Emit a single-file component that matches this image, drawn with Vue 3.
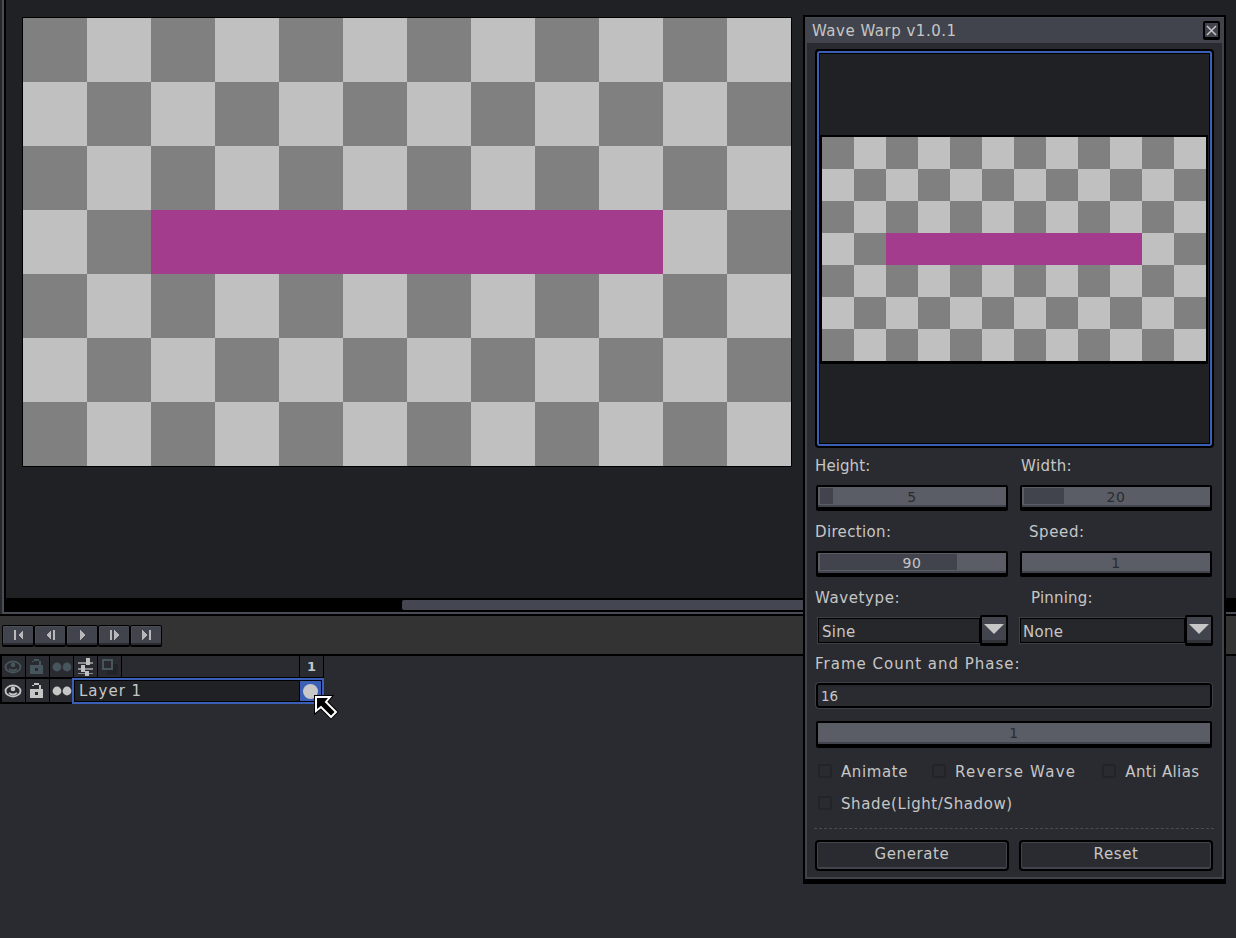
<script setup>
const navIcons = [
  { id: 'first', d: 'M0 0h2v10H0zM9 0v10L4 5z' },
  { id: 'prev', d: 'M5 0v10L0 5zM7 0h2v10H7z' },
  { id: 'play', d: 'M2 0l5 5-5 5z' },
  { id: 'next', d: 'M0 0h2v10H0zM4 0l5 5-5 5z' },
  { id: 'last', d: 'M0 0l5 5-5 5zM7 0h2v10H7z' }
]
const topSliders = [
  { label: 'Height:', value: '5', fill: '13px', shift: -1, ls: 0.1 },
  { label: 'Width:', value: '20', fill: '40px', shift: 1, ls: 0.4 },
  { label: 'Direction:', value: '90', fill: '137px', shift: -1, ls: 0.35, light: true },
  { label: 'Speed:', value: '1', fill: '0px', shift: 9, ls: 0.6 }
]
const combos = [
  { label: 'Wavetype:', value: 'Sine', shift: -1, ls: 0.6, cls: 'combo-l' },
  { label: 'Pinning:', value: 'None', shift: 11, ls: 0.2, cls: 'combo-r' }
]
</script>

<template>
  <div class="app">
    <section class="editor">
      <div class="ring">
        <div class="canvas">
          <div class="sprite">
            <div class="big checker">
              <div class="band"></div>
            </div>
          </div>
        </div>
        <div class="hscroll"><div class="thumb"></div></div>
      </div>
    </section>

    <div class="transport">
      <button v-for="n in navIcons" :key="n.id" class="nav">
        <svg width="9" height="10" viewBox="0 0 9 10" shape-rendering="crispEdges"><path :d="n.d" fill="#b8b8b8" /></svg>
      </button>
    </div>

    <section class="timeline">
      <div class="trow head">
        <div class="cell">
          <svg class="eye" width="18" height="14" viewBox="0 0 18 14"><ellipse cx="9" cy="7" rx="7.5" ry="5.5" fill="none" stroke="#47555c" stroke-width="1.8"/><circle cx="9" cy="5" r="2.3" fill="#47555c"/><path d="M5 9q4 3 8 0" fill="none" stroke="#47555c" stroke-width="1.8"/></svg>
        </div>
        <div class="cell">
          <svg class="lock" width="13" height="15" viewBox="0 0 13 15" shape-rendering="crispEdges"><path d="M0 6h13v9H0zM2 2h2V0h5v2h2v4H9V2H4v1H2z" fill="#47555c"/><path d="M5 9h3v3H5z" fill="#2a2b30"/></svg>
        </div>
        <div class="cell">
          <svg width="20" height="10" viewBox="0 0 20 10"><circle cx="5" cy="5" r="4.4" fill="#47555c"/><circle cx="15" cy="5" r="4.4" fill="#47555c"/></svg>
        </div>
        <div class="cell">
          <svg width="15" height="18" viewBox="0 0 15 18" shape-rendering="crispEdges"><path d="M0 4h15v2H0zM0 10h15v2H0zM0 15h15v1H0z" fill="#8a8c90"/><path d="M8 0h4v7H8zM3 7h4v7H3zM7 13h4v5H7z" fill="#c0c0c0"/></svg>
        </div>
        <div class="cell">
          <svg width="16" height="16" viewBox="0 0 16 16" shape-rendering="crispEdges"><path d="M5 5h11v11H5z" fill="#232428"/><path d="M0 0h11v11H0z" fill="#47555c"/><path d="M2 2h7v7H2z" fill="#2a2b30"/></svg>
        </div>
        <div class="cell wide"></div>
        <div class="cell frame-no">1</div>
      </div>
      <div class="trow layer">
        <div class="cell">
          <svg class="eye" width="18" height="14" viewBox="0 0 18 14"><ellipse cx="9" cy="7" rx="7.5" ry="5.5" fill="none" stroke="#c6c6c6" stroke-width="1.8"/><circle cx="9" cy="5" r="2.3" fill="#c6c6c6"/><path d="M5 9q4 3 8 0" fill="none" stroke="#c6c6c6" stroke-width="1.8"/></svg>
        </div>
        <div class="cell">
          <svg class="lock" width="13" height="15" viewBox="0 0 13 15" shape-rendering="crispEdges"><path d="M0 6h13v9H0zM2 2h2V0h5v2h2v4H9V2H4v1H2z" fill="#c6c6c6"/><path d="M5 9h3v3H5z" fill="#2a2b30"/></svg>
        </div>
        <div class="cell">
          <svg width="20" height="10" viewBox="0 0 20 10"><circle cx="5" cy="5" r="4.4" fill="#c6c6c6"/><circle cx="15" cy="5" r="4.4" fill="#c6c6c6"/></svg>
        </div>
        <div class="name">
          <span class="name-text">Layer 1</span>
          <span class="cel"><i class="dot"></i></span>
        </div>
      </div>
    </section>

    <svg class="cursor" width="26" height="26" viewBox="0 0 26 26">
      <polygon points="3,3 17,3 13,8 23,18 18,23 8,13 3,17" fill="#000" stroke="#000" stroke-width="4"/>
      <polygon points="3,3 17,3 13,8 23,18 18,23 8,13 3,17" fill="#000" stroke="#fff" stroke-width="2"/>
    </svg>

    <aside class="dialog">
      <header class="dlg-title">
        <span class="dlg-name">Wave Warp v1.0.1</span>
        <button class="close">
          <svg width="11" height="11" viewBox="0 0 11 11"><path d="M1 1l9 9M10 1l-9 9" stroke="#c6c6c6" stroke-width="1.5"/></svg>
        </button>
      </header>
      <div class="dlg-body">
        <div class="preview">
          <div class="small-frame">
            <div class="small checker"><div class="band small-band"></div></div>
          </div>
        </div>

        <div class="fields">
          <div v-for="s in topSliders" :key="s.label" class="field">
            <div class="lbl" :style="{ marginLeft: s.shift + 'px', letterSpacing: s.ls + 'px' }">{{ s.label }}</div>
            <div class="slider" :class="{ light: s.light }" :style="{ '--fill': s.fill }">{{ s.value }}</div>
          </div>
          <div v-for="c in combos" :key="c.label" class="field">
            <div class="lbl" :style="{ marginLeft: c.shift + 'px', letterSpacing: c.ls + 'px' }">{{ c.label }}</div>
            <div class="combo" :class="c.cls">
              <div class="combo-input">{{ c.value }}</div>
              <button class="combo-btn"><i class="tri"></i></button>
            </div>
          </div>
        </div>

        <div class="lbl frame-lbl">Frame Count and Phase:</div>
        <div class="entry">16</div>
        <div class="slider phase">1</div>

        <div class="checks first">
          <label class="chk c1"><i class="box"></i>Animate</label>
          <label class="chk c2"><i class="box"></i>Reverse Wave</label>
          <label class="chk c3"><i class="box"></i>Anti Alias</label>
        </div>
        <div class="checks second">
          <label class="chk"><i class="box"></i>Shade(Light/Shadow)</label>
        </div>

        <div class="sep"></div>
        <div class="actions">
          <button class="act">Generate</button>
          <button class="act">Reset</button>
        </div>
      </div>
    </aside>
  </div>
</template>

<style>
html, body { margin: 0; background: #2a2b30; }
</style>

<style scoped>
.app {
  position: relative;
  width: 1236px;
  height: 938px;
  overflow: hidden;
  display: flex;
  flex-direction: column;
  background: #2a2b30;
  font-family: "DejaVu Sans", sans-serif;
  font-size: 15px;
  letter-spacing: 0.6px;
  color: #c6c6c6;
}
button { font: inherit; letter-spacing: inherit; color: inherit; padding: 0; margin: 0; }
i { display: block; }

.checker {
  background-color: #808080;
  background-image: conic-gradient(#c0c0c0 25%, #808080 0 50%, #c0c0c0 0 75%, #808080 0);
}
.band { background: #a33c8c; }

.editor {
  height: 616px;
  flex: none;
  box-sizing: border-box;
  padding-left: 2px;
  border-bottom: 2px solid #000;
  background: #26272b;
}
.ring {
  height: 100%;
  box-sizing: border-box;
  border-left: 2px solid #484c55;
  border-bottom: 2px solid #484c55;
  display: flex;
  flex-direction: column;
}
.canvas {
  height: 598px;
  flex: none;
  box-sizing: border-box;
  border-left: 2px solid #000;
  background: #202125;
  padding: 17px 0 0 16px;
}
.sprite { width: 768px; height: 448px; outline: 1px solid #000; margin-left: 1px; margin-top: 1px; }
.big {
  width: 768px;
  height: 448px;
  box-sizing: border-box;
  background-size: 128px 128px;
  padding: 192px 128px 0;
}
.big .band { height: 64px; }
.hscroll {
  height: 14px;
  box-sizing: border-box;
  background: #000;
  padding: 2px 12px 2px 398px;
}
.thumb { height: 10px; background: #444751; border-radius: 2px 0 0 2px; }

.transport {
  height: 38px;
  flex: none;
  box-sizing: border-box;
  background: #333;
  padding: 9px 0 0 2px;
  display: flex;
  align-items: flex-start;
}
.nav {
  width: 32px;
  height: 22px;
  box-sizing: border-box;
  border: 1px solid #000;
  border-bottom-width: 2px;
  border-radius: 2px;
  background: #41444d;
  box-shadow: inset 0 -2px 0 #2a2b30, inset 1px 1px 0 #484c55;
  display: flex;
  align-items: center;
  justify-content: center;
  padding-bottom: 2px;
}

.timeline {
  flex: 1;
  border-top: 2px solid #000;
}
.trow {
  display: flex;
  width: 324px;
  background: #000;
  padding-left: 2px;
  box-sizing: border-box;
  gap: 1px;
}
.head { height: 23px; padding-bottom: 2px; }
.layer { height: 25px; padding-bottom: 2px; position: relative; }
.cell {
  width: 23px;
  flex: none;
  background: #2a2b30;
  display: flex;
  align-items: center;
  justify-content: center;
}
.eye { margin-right: 2px; }
.lock { margin-right: 2px; }
.wide { width: 177px; }
.frame-no { font-size: 13px; font-weight: 700; letter-spacing: 0; }
.name {
  width: 252px;
  height: 26px;
  margin: -1px 0 0 -2px;
  flex: none;
  box-sizing: border-box;
  border: 2px solid #3a5fb5;
  background: #000;
  padding: 1px;
  display: flex;
  position: relative;
  z-index: 1;
  gap: 1px;
}
.name-text {
  flex: 1;
  background: #202125;
  padding-left: 4px;
  line-height: 20px;
  font-size: 15px;
  letter-spacing: 1px;
}
.cel {
  width: 21px;
  flex: none;
  background: #3a5fb5;
  display: flex;
  align-items: center;
  justify-content: center;
}
.dot { width: 15px; height: 15px; border-radius: 50%; background: #c8c8c8; }
.cursor { position: absolute; left: 313px; top: 694px; z-index: 3; }

.dialog {
  position: absolute;
  left: 803px;
  top: 15px;
  width: 423px;
  height: 869px;
  box-sizing: border-box;
  border: 2px solid #000;
  border-bottom-width: 5px;
  background: #2a2b30;
  display: flex;
  flex-direction: column;
  box-shadow: inset 0 0 0 2px #41444d;
}
.dlg-title {
  height: 26px;
  flex: none;
  background: #41444d;
  border-top: 1px solid #484c55;
  box-sizing: border-box;
  display: flex;
  align-items: center;
  justify-content: space-between;
  padding: 0 4px 0 7px;
}
.dlg-name { font-size: 15px; letter-spacing: 0.5px; line-height: 22px; padding-top: 1px; }
.close {
  width: 17px;
  height: 19px;
  box-sizing: border-box;
  border: 2px solid #000;
  border-bottom-width: 3px;
  border-radius: 2px;
  background: #41444d;
  display: flex;
  align-items: center;
  justify-content: center;
}
.dlg-body { padding: 0 12px 0 11px; display: flex; flex-direction: column; flex: 1; }

.preview {
  width: 395px;
  height: 395px;
  margin: 8px 0 0 1px;
  box-sizing: border-box;
  border: 2px solid #3a5fb5;
  outline: 2px solid #000;
  box-shadow: inset 0 0 0 1px #000;
  border-radius: 2px;
  background: #202125;
  padding: 82px 0 0 1px;
  display: flex;
  align-items: flex-start;
  justify-content: flex-start;
}
.small-frame { border: 2px solid #000; border-bottom-width: 3px; }
.small {
  width: 384px;
  height: 224px;
  box-sizing: border-box;
  background-size: 64px 64px;
  padding: 96px 64px 0;
}
.small-band { height: 32px; }

.fields {
  display: grid;
  grid-template-columns: 192px 192px;
  column-gap: 12px;
  row-gap: 10px;
  margin-top: 9px;
}
.lbl { height: 20px; line-height: 22px; white-space: nowrap; }
.slider {
  height: 26px;
  box-sizing: border-box;
  margin-top: 10px;
  border: 2px solid #000;
  border-bottom-width: 4px;
  border-radius: 2px;
  background: linear-gradient(#41444d, #41444d) no-repeat 2px 1px / var(--fill, 0px) 16px, #5a5d66;
  box-shadow: inset 0 -2px 0 #41444d;
  text-align: center;
  line-height: 20px;
  font-size: 14px;
  color: #2a2b30;
}
.slider.light { color: #c6c6c6; }
.combo { margin-top: 8px; height: 31px; display: flex; align-items: flex-start; }
.combo-l { margin-left: 1px; }
.combo-l .combo-input { padding-left: 3px; }
.combo-r { margin-left: -1px; margin-right: -1px; }
.combo-input {
  flex: 1;
  height: 27px;
  margin-top: 2px;
  box-sizing: border-box;
  border: 2px solid #000;
  outline: 1px solid #3c3f46;
  outline-offset: -1px;
  background: #26272b;
  padding-left: 2px;
  line-height: 27px;
  font-size: 15px;
  letter-spacing: .3px;
}
.combo-btn {
  width: 28px;
  height: 31px;
  flex: none;
  margin-left: -1px;
  box-sizing: border-box;
  border: 2px solid #000;
  border-bottom-width: 3px;
  border-radius: 2px;
  background: #41444d;
  box-shadow: inset 0 -3px 0 #2f3137;
  display: flex;
  align-items: center;
  justify-content: center;
  padding-bottom: 3px;
}
.tri { width: 0; height: 0; border: 10px solid transparent; border-top-color: #c6c6c6; border-bottom-width: 0; }

.frame-lbl { margin: 7px 0 0 -1px; letter-spacing: 1px; }
.entry {
  height: 25px;
  margin-top: 10px;
  box-sizing: border-box;
  border: 2px solid #000;
  outline: 1px solid #3c3f46;
  border-radius: 3px;
  background: #2a2b30;
  box-shadow: inset 0 2px 0 #26272b;
  padding-left: 3px;
  line-height: 23px;
  font-size: 13.5px;
  letter-spacing: 0;
}
.phase { height: 27px; margin-top: 13px; line-height: 20px; }
.checks { display: flex; height: 16px; }
.first { margin-top: 15px; }
.second { margin-top: 16px; }
.chk { display: flex; align-items: center; white-space: nowrap; line-height: 16px; padding-top: 1px; height: 15px; }
.box {
  width: 14px;
  height: 14px;
  box-sizing: border-box;
  border: 2px solid #232428;
  border-radius: 3px;
  margin: -2px 9px 0 2px;
}
.c2 { margin-left: 24px; letter-spacing: 1.25px; }
.c2 .box { margin-left: 0; }
.c3 { margin-left: 26px; letter-spacing: .4px; }
.c3 .box { margin-left: 0; }
.sep {
  margin: 17px -2px 0 -2px;
  height: 0;
  border-top: 1px dashed #484c55;
}
.actions {
  margin: 11px 0 0 -1px;
  width: 398px;
  display: flex;
  justify-content: space-between;
}
.act {
  width: 194px;
  height: 31px;
  box-sizing: border-box;
  border: 2px solid #000;
  border-radius: 4px;
  background: #2a2b30;
  box-shadow: inset 0 0 0 1px #41444d, inset 0 -2px 0 #41444d;
  line-height: 24px;
  font-size: 15px;
  padding-bottom: 4px;
}
</style>
